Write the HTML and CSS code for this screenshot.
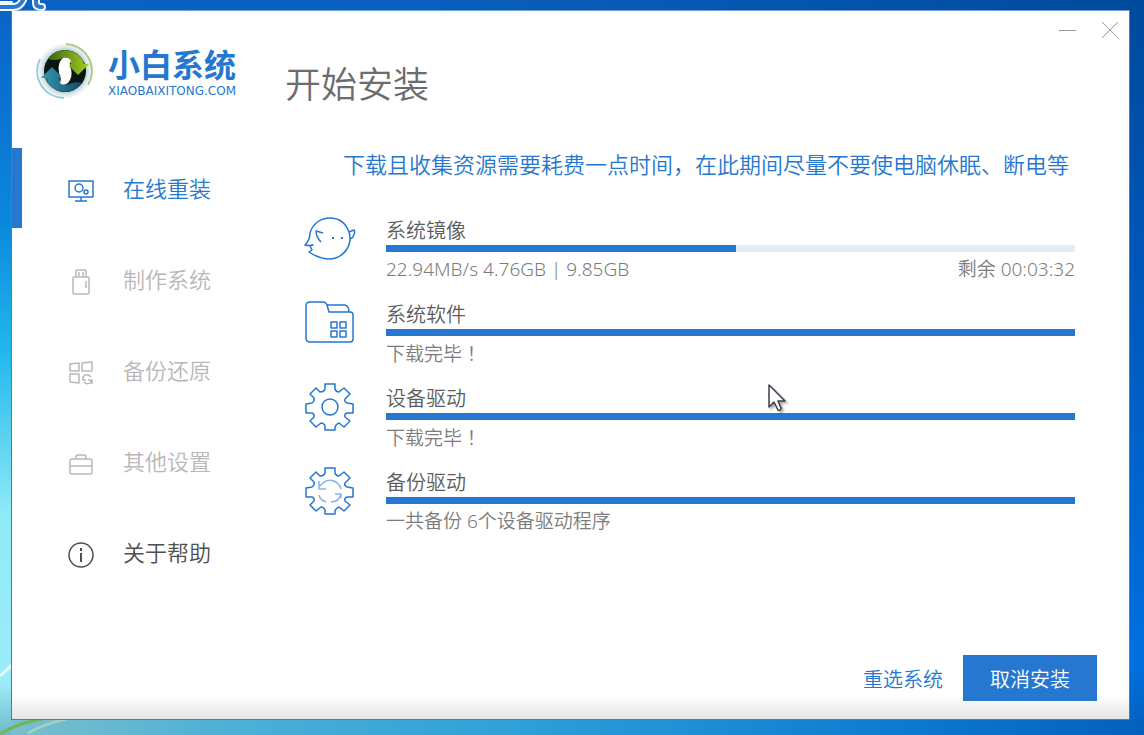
FILE: index.html
```html
<!DOCTYPE html>
<html lang="zh-CN">
<head>
<meta charset="utf-8">
<title>小白系统</title>
<link rel="stylesheet" href="styles.css">
</head>
<body>
<svg class="wallpaper" aria-hidden="true" width="80" height="180">
  <path d="M0 121L12 111" stroke="#c5f6fb" stroke-width="3"/>
  <path d="M0 121L12 109" stroke="#e4fbff" stroke-width="2"/>
  <path d="M0 179Q18 168 42 164" stroke="#70b655" stroke-width="3" fill="none"/>
  <path d="M28 178Q44 169 66 164" stroke="#a3ccca" stroke-width="3" fill="none"/>
</svg>
<svg class="desktop-mark" aria-hidden="true" width="50" height="13" fill="none" stroke-linejoin="round" stroke-linecap="round">
  <g stroke="#f2f8ff" stroke-width="8"><path d="M-2 7H13Q20 7 23 0M36 0V3Q36 7 42 7"/></g>
  <g stroke="#2f78cc" stroke-width="4"><path d="M-2 7H13Q20 7 23 0M36 0V3Q36 7 42 7"/></g>
  <path d="M0 2H12" stroke="#f2f8ff" stroke-width="2"/>
</svg>
<div class="window">
  <aside class="sidebar">
    <div class="brand">
      <svg class="brand-logo" viewBox="0 0 58 58" aria-hidden="true">
        <defs>
          <linearGradient id="green" x1="0" x2="1"><stop offset="0" stop-color="#3d6510"/><stop offset="1" stop-color="#a5cf22"/></linearGradient>
          <linearGradient id="teal" x1="0" x2="1"><stop offset="0" stop-color="#3797b6"/><stop offset="1" stop-color="#124a66"/></linearGradient>
          <radialGradient id="halo"><stop offset=".7" stop-color="#a9c9bf"/><stop offset=".86" stop-color="#dcebee"/><stop offset="1" stop-color="#fff"/></radialGradient>
        </defs>
        <circle cx="29" cy="29" r="28" fill="url(#halo)"/>
        <path d="M30 2A27 27 0 0 1 52 43" fill="none" stroke="#b5c784" stroke-width="2"/>
        <path d="M4 17A27 27 0 0 0 28 56" fill="none" stroke="#9fcadb" stroke-width="2"/>
        <circle cx="29" cy="29" r="21" fill="#0b1512"/>
        <path d="M12 17A21 21 0 0 1 46 17L48 22H53L42 33L31 22H35Q31 14 25 17Q19 19 12 17Z" fill="url(#green)"/>
        <path d="M46 41A21 21 0 0 1 12 41L10 36H5L16 25L27 36H23Q27 45 33 42Q39 39 46 41Z" fill="url(#teal)"/>
        <path d="M27 16Q33 15 35 19Q32 23 35 27Q37 35 32 41Q27 44 24 41Q26 36 23 31Q21 21 27 16Z" fill="#fff"/>
      </svg>
      <div class="brand-text">
        <div class="brand-name">小白系统</div>
        <div class="brand-site">XIAOBAIXITONG.COM</div>
      </div>
    </div>
    <nav class="nav">
      <button class="nav-item active">
        <svg class="nav-icon" viewBox="0 0 28 28"><path d="M2 4H26V20H2ZM14 20V24M8 24H20"/><circle cx="12" cy="11" r="4"/><circle cx="19" cy="15" r="2"/></svg>
        <span>在线重装</span>
      </button>
      <button class="nav-item muted">
        <svg class="nav-icon" viewBox="0 0 28 28"><path d="M9 9V3Q9 2 10 2H18Q19 2 19 3V9M12 4V8M16 4V8M7 9H21Q22 9 22 10V25Q22 26 21 26H7Q6 26 6 25V10Q6 9 7 9ZM19 13V20"/></svg>
        <span>制作系统</span>
      </button>
      <button class="nav-item muted">
        <svg class="nav-icon" viewBox="0 0 28 28"><path d="M3 5L12 4V12H3ZM15 4L25 3V12H15ZM3 15H12V24L3 23ZM24 18Q22 15 18 16Q15 18 16 21M16 18V21H19M17 23Q20 26 23 24L25 21M21 21H25V25"/></svg>
        <span>备份还原</span>
      </button>
      <button class="nav-item muted">
        <svg class="nav-icon" viewBox="0 0 28 28"><rect x="3" y="9" width="22" height="15" rx="2"/><path d="M9 9V7Q9 5 11 5H17Q19 5 19 7V9M3 16H25"/></svg>
        <span>其他设置</span>
      </button>
      <button class="nav-item">
        <svg class="nav-icon" viewBox="0 0 28 28"><circle cx="14" cy="14" r="12"/><path d="M14 12V21M14 7V10" stroke-width="2"/></svg>
        <span>关于帮助</span>
      </button>
    </nav>
  </aside>
  <main class="content">
    <header class="titlebar">
      <h1 class="title">开始安装</h1>
      <div class="window-controls">
        <button class="control" aria-label="最小化"><svg width="18" height="18"><path d="M0 9.500H17"/></svg></button>
        <button class="control" aria-label="关闭"><svg width="18" height="18"><path d="M1 1L17 17M17 1L1 17"/></svg></button>
      </div>
    </header>
    <p class="notice">下载且收集资源需要耗费一点时间，在此期间尽量不要使电脑休眠、断电等</p>
    <section class="tasks">
      <article class="task">
        <svg class="task-icon" viewBox="0 0 52 52"><path d="M6 20C9 10 17 5 26 5C36 5 42 11 45 19C49 32 40 45 26 46C19 46 11 43 5 39L8 37L6 33L9 32Q5 33 1 32Q6 27 6 20ZM45 19L50 17Q52 20 48 25L46 26M19 20L12 18Q12 24 17 29"/><path d="M28 25H30M37 25H39" stroke-width="2"/></svg>
        <div class="task-body">
          <h2 class="task-name">系统镜像</h2>
          <progress class="bar" max="689" value="350" aria-label="系统镜像"></progress>
          <div class="task-status"><span>22.94MB/s 4.76GB | 9.85GB</span><span>剩余 00:03:32</span></div>
        </div>
      </article>
      <article class="task">
        <svg class="task-icon" viewBox="0 0 52 52"><path d="M6 5H19Q22 5 23 8L25 15H46Q49 15 49 18V42Q49 45 46 45H6Q2 45 2 41V9Q2 5 6 5ZM23 8H41Q45 9 45 15M27 25H33V31H27ZM36 25H42V31H36ZM27 34H33V40H27ZM36 34H42V40H36Z"/></svg>
        <div class="task-body">
          <h2 class="task-name">系统软件</h2>
          <progress class="bar" max="100" value="100" aria-label="系统软件"></progress>
          <div class="task-status"><span>下载完毕<span class="mark" lang="zh-TW">！</span></span></div>
        </div>
      </article>
      <article class="task">
        <svg class="task-icon" viewBox="0 0 52 52"><path id="gear" d="M21 3H31V8Q32 11 35 11L40 7L46 13L41 18Q40 21 43 22L49 23V32H43Q40 33 41 36L46 40L40 46L35 42Q32 43 31 46V49H21V45Q20 42 17 42L12 46L6 40L10 36Q11 33 8 32H2V23L8 22Q11 20 10 17L6 13L12 7L16 11Q20 11 21 8Z"/><circle cx="26" cy="26" r="8"/></svg>
        <div class="task-body">
          <h2 class="task-name">设备驱动</h2>
          <progress class="bar" max="100" value="100" aria-label="设备驱动"></progress>
          <div class="task-status"><span>下载完毕<span class="mark" lang="zh-TW">！</span></span></div>
        </div>
      </article>
      <article class="task">
        <svg class="task-icon" viewBox="0 0 52 52"><use href="#gear"/><path opacity=".55" d="M16 21Q22 13 30 16Q36 19 37 24M15 16V24H22M15 30Q16 35 22 37M27 37Q35 37 37 29M31 29H37V33"/></svg>
        <div class="task-body">
          <h2 class="task-name">备份驱动</h2>
          <progress class="bar" max="100" value="100" aria-label="备份驱动"></progress>
          <div class="task-status"><span>一共备份 6个设备驱动程序</span></div>
        </div>
      </article>
    </section>
    <footer class="actions">
      <button class="action-link">重选系统</button>
      <button class="action-primary">取消安装</button>
    </footer>
  </main>
</div>
<svg class="cursor" aria-hidden="true" width="22" height="32" viewBox="0 0 22 32"><path d="M1 1V23L6 18L10 26Q13 27 13 24L10 17H17Z" fill="#fff" stroke="#3c3f4a" stroke-width="1.500" stroke-linejoin="round"/></svg>
</body>
</html>
```
FILE: styles.css
```css
* { box-sizing: border-box; }

body {
  margin: 0;
  min-height: 100vh;
  padding: 10px 14px 15px 11px;
  display: flex;
  position: relative;
  overflow: hidden;
  font-family: "Noto Sans", "Noto Sans CJK SC", sans-serif;
  font-weight: 350;
  color: #5c5c5c;
  background:
    linear-gradient(#0a62c4, #0b87dc 30%, #22b8ec 48%, #8feaf7 70%, #9cecf8 93%, #6cb9c9) left / 12px 100% no-repeat,
    linear-gradient(90deg, #7cc0cc, #4db0d6 20%, #2fa0d8 45%, #0c78d0 80%, #0560bc) bottom / 100% 16px no-repeat,
    linear-gradient(90deg, #0a62c4, #0a5fbe 40%, #004a9c) top / 100% 10px no-repeat,
    linear-gradient(#004a9c, #0054b4 30%, #0070e0 90%, #0560bc);
}

button {
  font: inherit;
  color: inherit;
  background: none;
  border: 0;
  padding: 0;
  cursor: pointer;
}

h1, h2, p { margin: 0; font-weight: inherit; }

svg { flex: none; }

.wallpaper { position: absolute; left: 0; bottom: 0; }
.desktop-mark { position: absolute; left: 0; top: 0; z-index: 2; }
.cursor {
  position: absolute;
  left: 768px;
  top: 384px;
  filter: drop-shadow(2px 2px 1px #0005);
}

.window {
  flex: 1;
  display: flex;
  position: relative;
  background: linear-gradient(#fff, #fff) top / 100% calc(100% - 24px) no-repeat, linear-gradient(0deg, #e4e4e4, #fff 24px);
  border: 1px solid #3f7fc4;
  border-top-color: #6d9fd8;
}

.sidebar { flex: none; width: 273px; }

.brand {
  display: flex;
  align-items: center;
  gap: 14px;
  height: 137px;
  padding: 0 0 17px 24px;
}
.brand-logo { width: 58px; height: 58px; }
.brand-text { color: #2577cf; }
.brand-name { font-size: 32px; line-height: 40px; font-weight: 700; }
.brand-site { font-family: "DejaVu Sans", sans-serif; font-size: 12px; line-height: 12px; font-weight: 400; }

.nav { display: flex; flex-direction: column; gap: 11px; }
.nav-item {
  display: flex;
  align-items: center;
  gap: 28px;
  height: 80px;
  padding: 0 0 2px 45px;
  border-left: 10px solid transparent;
  font-size: 22px;
  color: #4f4f4f;
}
.nav-item.active { color: #2577cf; border-left-color: #2577cf; }
.nav-item.muted { color: #b8b8b8; }
.nav-icon { width: 28px; height: 28px; margin-top: 8px; }

.nav-icon, .control svg, .task-icon {
  fill: none;
  stroke: currentColor;
  stroke-width: 1.5;
  stroke-linejoin: round;
}

.content { flex: 1; display: flex; flex-direction: column; min-width: 0; }

.titlebar { display: flex; justify-content: space-between; height: 130px; }
.title { padding-top: 48px; font-size: 36px; line-height: 52px; color: #6c6c6c; }
.window-controls { display: flex; gap: 24px; padding: 10px 10px 0 0; height: 30px; }
.control { display: flex; width: 18px; height: 18px; color: #999; }
.control svg { stroke-width: 1; }

.notice {
  padding: 7px 60px 0 0;
  font-size: 22px;
  line-height: 32px;
  color: #2577cf;
  text-align: right;
  white-space: nowrap;
}

.mark { font-family: "Noto Sans CJK TC", sans-serif; }

.tasks {
  display: flex;
  flex-direction: column;
  gap: 12px;
  padding: 37px 54px 0 19px;
}
.task { display: flex; gap: 30px; height: 72px; }
.task-icon { width: 52px; height: 52px; margin-top: -4px; color: #2577cf; }
.task-body { flex: 1; min-width: 0; }
.task-name { font-size: 20px; line-height: 28px; }
.bar {
  display: block;
  width: 100%;
  height: 7px;
  border: 0;
  appearance: none;
  background: #e4ecf8;
}
.bar::-webkit-progress-bar { background: #e4ecf8; }
.bar::-webkit-progress-value { background: #2577cf; }
.bar::-moz-progress-bar { background: #2577cf; }
.task-status {
  display: flex;
  justify-content: space-between;
  padding-top: 3px;
  font-size: 19px;
  line-height: 28px;
  color: #7c7c7c;
}

.actions {
  display: flex;
  justify-content: flex-end;
  align-items: center;
  gap: 20px;
  margin-top: auto;
  padding: 0 32px 18px 0;
  font-size: 20px;
}
.action-link { color: #2577cf; }
.action-primary { width: 134px; height: 46px; background: #2577cf; color: #fff; }
```
